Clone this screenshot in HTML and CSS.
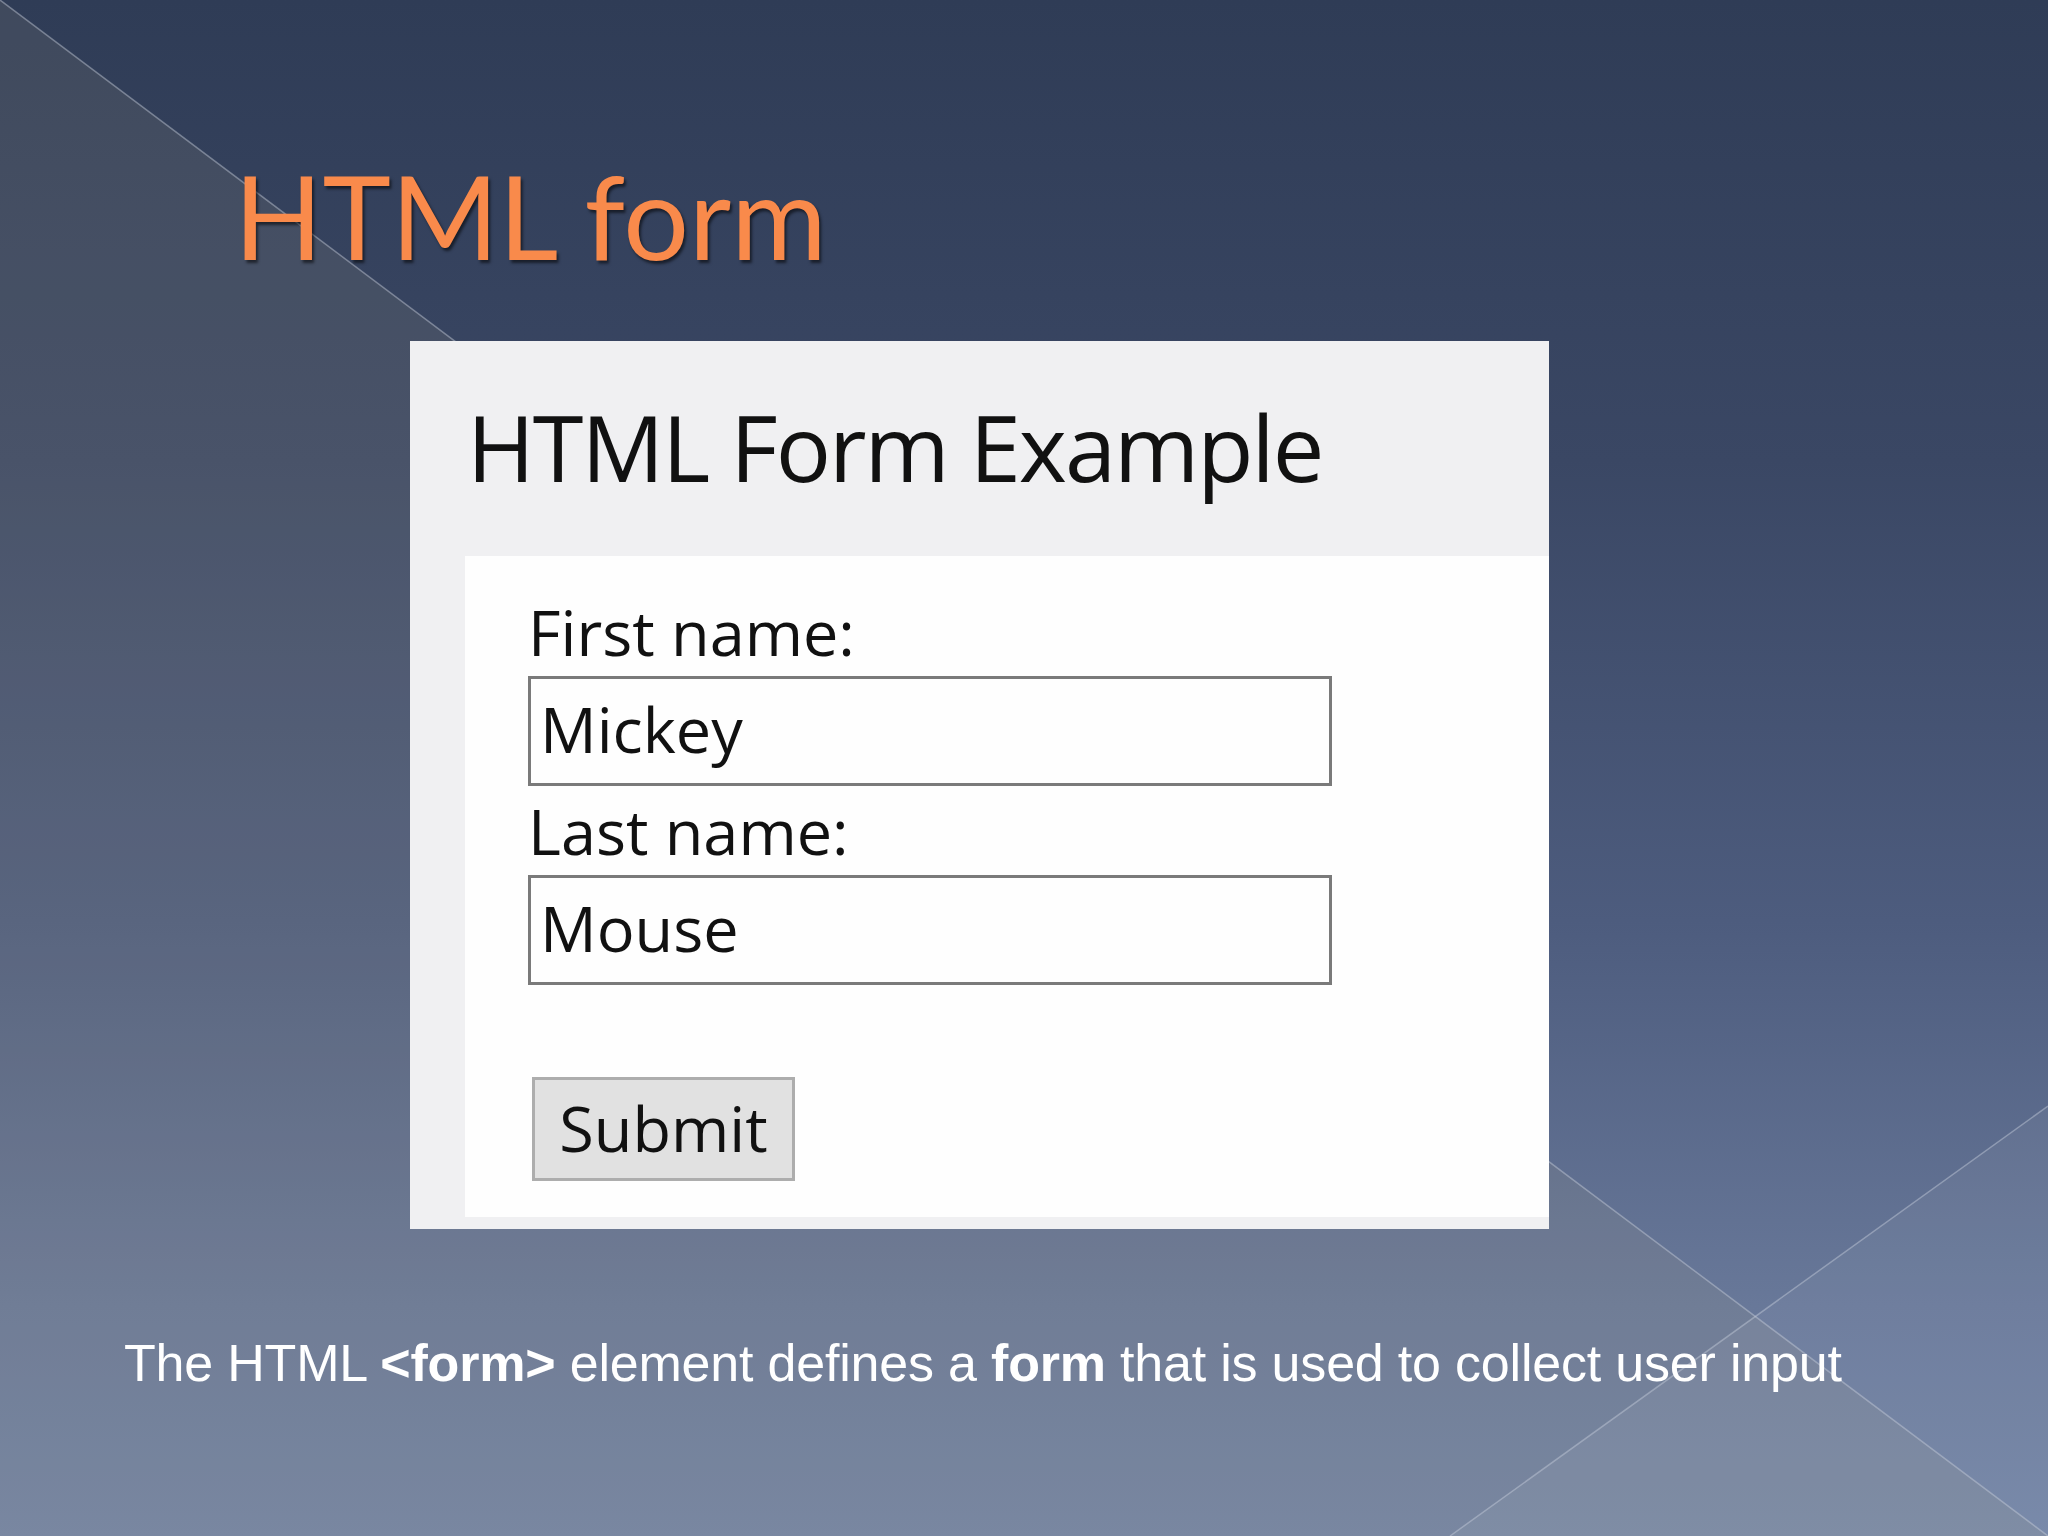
FILE: index.html
```html
<!DOCTYPE html>
<html lang="en">
<head>
<meta charset="utf-8">
<title>HTML form</title>
<link rel="stylesheet" href="styles.css">
</head>
<body>
<div class="slide">
  <svg class="deco" width="2048" height="1536" viewBox="0 0 2048 1536" aria-hidden="true">
    <polygon points="0,0 2048,1536 0,1536" fill="#a09a86" fill-opacity="0.15"/>
    <polygon points="1450,1536 2048,1106 2048,1536" fill="#ffffff" fill-opacity="0.05"/>
    <line x1="0" y1="0" x2="2048" y2="1536" stroke="#c8cfdc" stroke-opacity="0.45" stroke-width="1.5"/>
    <line x1="1450" y1="1536" x2="2048" y2="1106" stroke="#c8cfdc" stroke-opacity="0.45" stroke-width="1.5"/>
  </svg>
  <div class="content">
    <h1 class="title">HTML form</h1>
    <div class="shot">
      <h2 class="shot-heading">HTML Form Example</h2>
      <div class="shot-panel">
        <div class="field-label">First name:</div>
        <div class="field-input">Mickey</div>
        <div class="field-label">Last name:</div>
        <div class="field-input">Mouse</div>
        <div class="submit">Submit</div>
      </div>
    </div>
    <p class="caption">The HTML <b>&lt;form&gt;</b> element defines a <b>form</b> that is used to collect user input</p>
  </div>
</div>
</body>
</html>
```

FILE: styles.css
```css
html, body {
  margin: 0;
  padding: 0;
}

.slide {
  position: relative;
  width: 2048px;
  height: 1536px;
  overflow: hidden;
  background: linear-gradient(180deg, #2f3c56 0%, #3a4764 30%, #4d5c7e 60%, #687899 85%, #7284a6 100%);
}

.deco {
  position: absolute;
  left: 0;
  top: 0;
}

.content {
  position: relative;
  display: flex;
  flex-direction: column;
}

.title {
  margin: 151px 0 0 234px;
  font-family: Lato, "Open Sans", sans-serif;
  font-weight: 400;
  font-size: 116px;
  line-height: 130px;
  color: #f98a4b;
  text-shadow: 2px 3px 3px rgba(0, 0, 0, 0.55);
}

.shot {
  margin: 60px 0 0 410px;
  width: 1139px;
  height: 888px;
  background: #f0f0f2;
  display: flex;
  flex-direction: column;
  box-sizing: border-box;
  padding-bottom: 12px;
}

.shot-heading {
  margin: 0;
  padding: 46px 0 0 57px;
  height: 215px;
  box-sizing: border-box;
  font-family: "Open Sans", sans-serif;
  font-weight: 400;
  font-size: 92px;
  letter-spacing: -2px;
  line-height: 120px;
  color: #111;
}

.shot-panel {
  margin-left: 55px;
  flex: 1;
  background: #fefefe;
  display: flex;
  flex-direction: column;
  align-items: flex-start;
  padding: 36px 0 0 63px;
}

.field-label {
  font-family: "Open Sans", sans-serif;
  font-size: 63px;
  line-height: 80px;
  color: #111;
}

.field-input {
  width: 804px;
  height: 110px;
  box-sizing: border-box;
  border: 3px solid #7a7a7a;
  padding-left: 9px;
  font-family: "Open Sans", sans-serif;
  font-size: 63px;
  line-height: 100px;
  color: #111;
  margin: 4px 0 5px;
}

.submit {
  margin: 87px 0 0 4px;
  width: 263px;
  height: 104px;
  box-sizing: border-box;
  background: #e1e1e1;
  border: 3px solid #adadad;
  font-family: "Open Sans", sans-serif;
  font-size: 63px;
  line-height: 96px;
  text-align: center;
  color: #111;
}

.caption {
  margin: 102px 0 0 124px;
  font-family: "Liberation Sans", Arial, sans-serif;
  font-size: 52px;
  letter-spacing: -0.2px;
  line-height: 64px;
  color: #ffffff;
  white-space: nowrap;
}

.caption b {
  font-weight: 700;
}
```
